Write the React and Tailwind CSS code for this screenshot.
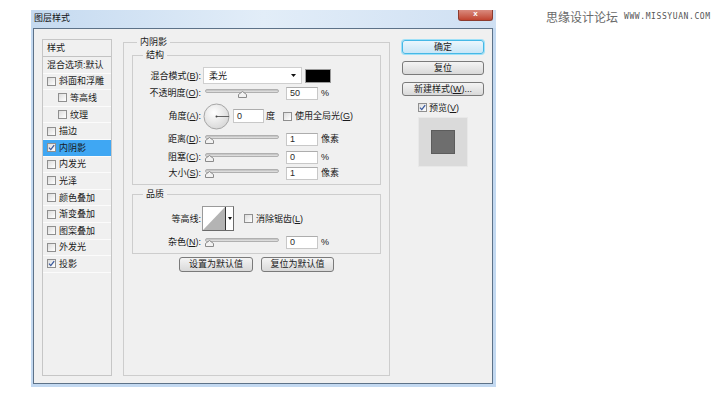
import React from "react";

function Check({ checked }) {
  return (
    <span className="relative inline-block h-[9px] w-[9px] shrink-0 border border-[#8f8f8f] bg-linear-to-br from-[#dcdcdc] to-white">
      {checked && (
        <svg viewBox="0 0 9 9" width="9" height="9" className="absolute -left-px -top-px">
          <path d="M2 4.6 L3.8 6.6 L7.2 2.2" fill="none" stroke="#3a5a9e" strokeWidth="1.3" />
        </svg>
      )}
    </span>
  );
}

function Item({ label, checked, indent, active }) {
  return (
    <div
      className={`flex h-[16.6px] shrink-0 items-center gap-[3px] border-b border-[#fbfbfb] ${
        indent ? "pl-[15px]" : "pl-[4px]"
      } ${active ? "bg-[#3fa7f3]" : ""}`}
    >
      <Check checked={checked} />
      <span className="leading-[12px]">{label}</span>
    </div>
  );
}

function Slider({ pos }) {
  return (
    <div className="relative ml-[4px] h-[14px] w-[74px] shrink-0">
      <div className="absolute left-0 right-0 top-[3px] h-[4px] rounded-full border border-[#b0b0b0] bg-linear-to-b from-[#bdbdbd] to-[#e6e6e6]" />
      <svg className={`absolute top-[5px] ${pos}`} width="9" height="7" viewBox="0 0 9 7">
        <path d="M0.5 6.5 V3.5 L4.5 0.5 L8.5 3.5 V6.5 Z" fill="#f2f2f2" stroke="#8a8a8a" />
      </svg>
    </div>
  );
}

function Field({ v, extra }) {
  return (
    <div className={`flex h-[13px] shrink-0 items-center border border-[#c8c8c8] border-t-[#adadad] bg-white pl-[3px] leading-[11px] text-[#2a2a2a] ${extra}`}>
      {v}
    </div>
  );
}

function Row({ label, className, children }) {
  return (
    <div className={`flex shrink-0 items-center ${className}`}>
      <span className="w-[68px] shrink-0 text-right leading-[12px]">{label}</span>
      {children}
    </div>
  );
}

function Btn({ children, focus, className }) {
  return (
    <div
      className={`flex shrink-0 items-center justify-center rounded-[3px] border leading-[11px] ${
        focus
          ? "border-[#45b8e6] bg-linear-to-b from-[#eaf6fd] to-[#c9e6f6] shadow-[0_0_0_1px_#9fe0f7]"
          : "border-[#7a7a7a] bg-linear-to-b from-[#f4f4f4] to-[#d9d9d9]"
      } ${className}`}
    >
      {children}
    </div>
  );
}

function U({ children }) {
  return <span className="underline underline-offset-[1px]">{children}</span>;
}

export default function App() {
  const items = [
    { label: "斜面和浮雕" },
    { label: "等高线", indent: true },
    { label: "纹理", indent: true },
    { label: "描边" },
    { label: "内阴影", checked: true, active: true },
    { label: "内发光" },
    { label: "光泽" },
    { label: "颜色叠加" },
    { label: "渐变叠加" },
    { label: "图案叠加" },
    { label: "外发光" },
    { label: "投影", checked: true },
  ];

  return (
    <div className="flex h-[395px] w-[720px] items-start bg-white pl-[31px] pt-[10px] font-['Liberation_Sans','Noto_Sans_CJK_SC',sans-serif] text-[9px] leading-[12px] text-[#1a1a1a]">
      {/* Window */}
      <div className="flex h-[377px] w-[465px] shrink-0 flex-col bg-[#c3d9f1]">
        {/* Title bar */}
        <div className="flex h-[18px] shrink-0 items-start justify-between bg-linear-to-r from-[#c5daf0] via-[#e2edf8] to-[#cfe0f3]">
          <span className="ml-[3px] mt-[2px] leading-[12px] text-[#111]">图层样式</span>
          <div className="mr-[3px] flex h-[11px] w-[35px] items-center justify-center overflow-hidden rounded-b-[3px] border border-t-0 border-[#8c3b2e] bg-linear-to-b from-[#d98a7e] to-[#c0432f]">
            <span className="-mt-[2px] text-[8px] font-bold leading-[8px] text-white">x</span>
          </div>
        </div>
        {/* Body */}
        <div className="flex flex-1 pb-[3px] pl-[2px] pr-[3px]">
          <div className="flex flex-1 items-start border border-[#5d7288] bg-[#f0f0f0]">
            {/* Left list */}
            <div className="ml-[8px] mt-[10px] flex h-[337px] w-[70px] shrink-0 flex-col border border-[#c6c6c6]">
              <div className="flex h-[17px] shrink-0 items-center border-b border-[#c2c2c2] pl-[4px]">样式</div>
              <div className="flex h-[16.6px] shrink-0 items-center border-b border-[#fbfbfb] pl-[4px]">混合选项:默认</div>
              {items.map((it) => (
                <Item key={it.label} {...it} />
              ))}
            </div>

            {/* Main group */}
            <fieldset className="m-0 ml-[11px] mt-[7px] h-[340px] w-[267px] shrink-0 border border-[#cdcdcd] px-[8px] pb-0 pt-[1px]">
              <legend className="ml-[5px] px-[3px] leading-[12px]">内阴影</legend>

              <fieldset className="m-0 border border-[#cdcdcd] px-0 pb-[4px] pt-[6px]">
                <legend className="ml-[10px] px-[3px] leading-[12px]">结构</legend>
                <Row className="h-[17px]" label={<>混合模式(<U>B</U>):</>}>
                  <div className="ml-[2px] flex h-[17px] w-[99px] items-center justify-between border border-[#cfcfcf] bg-white pl-[5px] pr-[5px]">
                    <span>柔光</span>
                    <svg width="5" height="3" viewBox="0 0 5 3">
                      <path d="M0 0 H5 L2.5 3 Z" fill="#111" />
                    </svg>
                  </div>
                  <div className="ml-[3px] h-[14px] w-[26px] border border-[#9a9a9a] bg-black" />
                </Row>
                <Row className="mt-[2px] h-[14px]" label={<>不透明度(<U>O</U>):</>}>
                  <Slider pos="left-[33px]" />
                  <Field v="50" extra="ml-[7px] w-[32px]" />
                  <span className="ml-[3px]">%</span>
                </Row>
                <Row className="mt-[3px] h-[26px]" label={<>角度(<U>A</U>):</>}>
                  <svg className="ml-[2px] shrink-0" width="27" height="27" viewBox="0 0 27 27">
                    <defs>
                      <radialGradient id="dial" cx="40%" cy="35%" r="70%">
                        <stop offset="0" stopColor="#ffffff" />
                        <stop offset="1" stopColor="#d6d6d6" />
                      </radialGradient>
                    </defs>
                    <circle cx="13.5" cy="13.5" r="12.5" fill="url(#dial)" stroke="#a6a6a6" />
                    <line x1="13.5" y1="13.5" x2="26" y2="13.5" stroke="#555" strokeWidth="0.9" />
                    <circle cx="13.5" cy="13.5" r="1" fill="#444" />
                  </svg>
                  <Field v="0" extra="ml-[3px] h-[14px] w-[31px]" />
                  <span className="ml-[2px]">度</span>
                  <span className="ml-[8px] flex items-center gap-[3px]">
                    <Check />
                    <span>使用全局光(<U>G</U>)</span>
                  </span>
                </Row>
                <Row className="mt-[3px] h-[14px]" label={<>距离(<U>D</U>):</>}>
                  <Slider pos="left-[0px]" />
                  <Field v="1" extra="ml-[7px] w-[32px]" />
                  <span className="ml-[3px]">像素</span>
                </Row>
                <Row className="mt-[4px] h-[14px]" label={<>阻塞(<U>C</U>):</>}>
                  <Slider pos="left-[0px]" />
                  <Field v="0" extra="ml-[7px] w-[32px]" />
                  <span className="ml-[3px]">%</span>
                </Row>
                <Row className="mt-[2px] h-[14px]" label={<>大小(<U>S</U>):</>}>
                  <Slider pos="left-[0px]" />
                  <Field v="1" extra="ml-[7px] w-[32px]" />
                  <span className="ml-[3px]">像素</span>
                </Row>
              </fieldset>

              <fieldset className="m-0 mt-[3px] border border-[#cdcdcd] px-0 pb-[4px] pt-[6px]">
                <legend className="ml-[10px] px-[3px] leading-[12px]">品质</legend>
                <Row className="h-[25px]" label="等高线:">
                  <div className="ml-[1px] flex h-[25px] shrink-0 border border-[#6a6a6a] border-l-[#9a9a9a] border-t-[#9a9a9a]">
                    <svg width="22" height="23" viewBox="0 0 22 23" className="bg-white">
                      <polygon points="0,23 22,0 22,23" fill="#b4b4b4" />
                    </svg>
                    <div className="flex w-[8px] items-center justify-center border-l border-[#333] bg-white">
                      <svg width="4" height="3" viewBox="0 0 4 3">
                        <path d="M0 0 H4 L2 3 Z" fill="#111" />
                      </svg>
                    </div>
                  </div>
                  <span className="ml-[10px] flex items-center gap-[3px]">
                    <Check />
                    <span>消除锯齿(<U>L</U>)</span>
                  </span>
                </Row>
                <Row className="mt-[4px] h-[14px]" label={<>杂色(<U>N</U>):</>}>
                  <Slider pos="left-[0px]" />
                  <Field v="0" extra="ml-[7px] w-[32px]" />
                  <span className="ml-[3px]">%</span>
                </Row>
              </fieldset>

              <div className="mt-[3px] flex justify-center gap-[8px]">
                <Btn className="h-[15px] w-[74px]">设置为默认值</Btn>
                <Btn className="h-[15px] w-[73px]">复位为默认值</Btn>
              </div>
            </fieldset>

            {/* Right column */}
            <div className="ml-[12px] mt-[11px] flex w-[82px] shrink-0 flex-col">
              <Btn focus className="h-[14px]">确定</Btn>
              <Btn className="mt-[7px] h-[14px]">复位</Btn>
              <Btn className="mt-[7px] h-[14px]">新建样式(<U>W</U>)...</Btn>
              <div className="ml-[16px] mt-[6px] flex h-[11px] items-center gap-[2px]">
                <Check checked />
                <span>预览(<U>V</U>)</span>
              </div>
              <div className="ml-[16px] mt-[4px] flex h-[50px] w-[50px] items-center justify-center border border-[#e8e8e8] bg-[#dadada]">
                <div className="h-[24px] w-[24px] border border-[#5c5c5c] bg-[#6e6e6e]" />
              </div>
            </div>
          </div>
        </div>
      </div>

      {/* Watermark */}
      <div className="ml-[50px] flex items-center gap-[6px]">
        <span className="font-['Noto_Sans_CJK_SC',sans-serif] text-[12px] leading-[14px] text-[#6a6a6a]">思缘设计论坛</span>
        <span className="font-['DejaVu_Sans_Mono',monospace] text-[8px] leading-[10px] tracking-[0.6px] text-[#555]">WWW.MISSYUAN.COM</span>
      </div>
    </div>
  );
}
